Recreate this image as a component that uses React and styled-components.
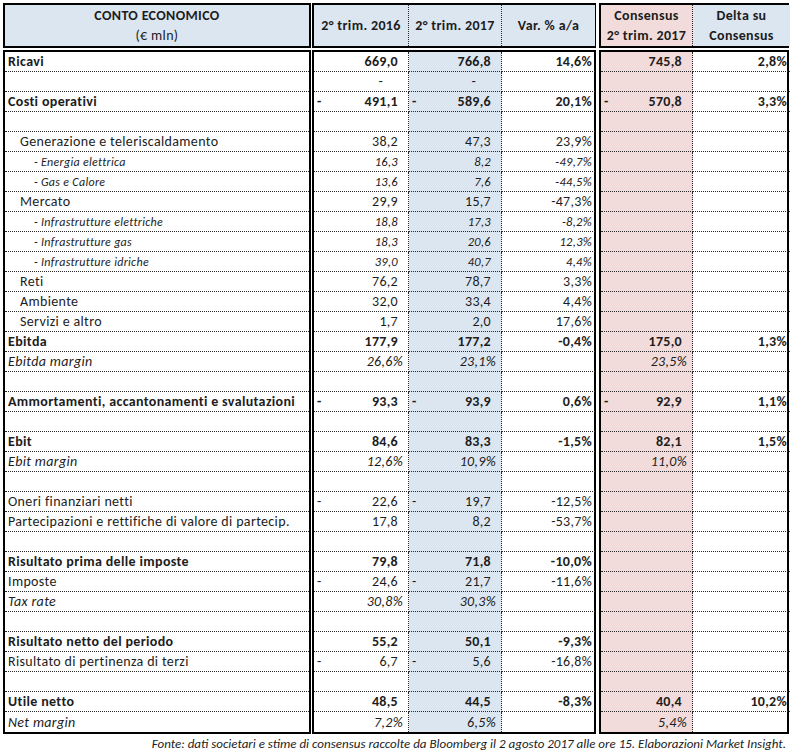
import React from 'react';
import styled, { createGlobalStyle } from 'styled-components';

const BLUE = '#dce6f1';
const PINK = '#f2dcdb';
const DOT = '1px dotted #2a2a2a';

const GlobalStyle = createGlobalStyle`
  body {
    margin: 0;
    background: #fff;
    font-family: "Carlito", "Lato", "Liberation Sans", sans-serif;
    color: #1c1c1c;
  }
`;

// label, kind, [2016, 2017, var], [consensus, delta]
const rows = [
  { label: 'Ricavi', kind: 'bold', v: ['669,0', '766,8', '14,6%'], c: ['745,8', '2,8%'] },
  { kind: 'blank', v: ['-', '-', ''] },
  { label: 'Costi operativi', kind: 'bold', v: ['- 491,1', '- 589,6', '20,1%'], c: ['- 570,8', '3,3%'] },
  { kind: 'blank' },
  { label: 'Generazione e teleriscaldamento', kind: 'item', v: ['38,2', '47,3', '23,9%'] },
  { label: '- Energia elettrica', kind: 'sub', v: ['16,3', '8,2', '-49,7%'] },
  { label: '- Gas e Calore', kind: 'sub', v: ['13,6', '7,6', '-44,5%'] },
  { label: 'Mercato', kind: 'item', v: ['29,9', '15,7', '-47,3%'] },
  { label: '- Infrastrutture elettriche', kind: 'sub', v: ['18,8', '17,3', '-8,2%'] },
  { label: '- Infrastrutture gas', kind: 'sub', v: ['18,3', '20,6', '12,3%'] },
  { label: '- Infrastrutture idriche', kind: 'sub', v: ['39,0', '40,7', '4,4%'] },
  { label: 'Reti', kind: 'item', v: ['76,2', '78,7', '3,3%'] },
  { label: 'Ambiente', kind: 'item', v: ['32,0', '33,4', '4,4%'] },
  { label: 'Servizi e altro', kind: 'item', v: ['1,7', '2,0', '17,6%'] },
  { label: 'Ebitda', kind: 'bold', v: ['177,9', '177,2', '-0,4%'], c: ['175,0', '1,3%'] },
  { label: 'Ebitda margin', kind: 'margin', v: ['26,6%', '23,1%', ''], c: ['23,5%', ''] },
  { kind: 'blank' },
  { label: 'Ammortamenti, accantonamenti e svalutazioni', kind: 'bold', v: ['- 93,3', '- 93,9', '0,6%'], c: ['- 92,9', '1,1%'] },
  { kind: 'blank' },
  { label: 'Ebit', kind: 'bold', v: ['84,6', '83,3', '-1,5%'], c: ['82,1', '1,5%'] },
  { label: 'Ebit margin', kind: 'margin', v: ['12,6%', '10,9%', ''], c: ['11,0%', ''] },
  { kind: 'blank' },
  { label: 'Oneri finanziari netti', kind: 'plain', v: ['- 22,6', '- 19,7', '-12,5%'] },
  { label: 'Partecipazioni e rettifiche di valore di partecip.', kind: 'plain', v: ['17,8', '8,2', '-53,7%'] },
  { kind: 'blank' },
  { label: 'Risultato prima delle imposte', kind: 'bold', v: ['79,8', '71,8', '-10,0%'] },
  { label: 'Imposte', kind: 'plain', v: ['- 24,6', '- 21,7', '-11,6%'] },
  { label: 'Tax rate', kind: 'margin', v: ['30,8%', '30,3%', ''] },
  { kind: 'blank' },
  { label: 'Risultato netto del periodo', kind: 'bold', v: ['55,2', '50,1', '-9,3%'] },
  { label: 'Risultato di pertinenza di terzi', kind: 'plain', v: ['- 6,7', '- 5,6', '-16,8%'] },
  { kind: 'blank' },
  { label: 'Utile netto', kind: 'bold', v: ['48,5', '44,5', '-8,3%'], c: ['40,4', '10,2%'] },
  { label: 'Net margin', kind: 'margin', v: ['7,2%', '6,5%', ''], c: ['5,4%', ''] },
];

const indent = { item: 12, sub: 26 };

const Page = styled.div`
  padding: 3px 0 0 3px;
  width: 790px;
`;

const Sheet = styled.div`
  display: grid;
  grid-template-columns: 308px 285px 193px;
  grid-template-rows: 45px auto;
  row-gap: 2px;
`;

const Box = styled.div`
  border: 2px solid #000;
  margin-left: ${p => p.$ml || 0}px;
  background: #fff;
  display: ${p => (p.$cols ? 'grid' : 'block')};
  grid-template-columns: ${p => p.$cols || 'none'};
`;

const HeadCell = styled.div`
  background: ${p => p.$bg};
  display: flex;
  flex-direction: column;
  align-items: center;
  justify-content: center;
  height: 100%;
  box-sizing: border-box;
  border-right: ${p => (p.$sep ? DOT : 'none')};
  font-size: 14px;
  letter-spacing: 0.35px;
  font-weight: 700;
  line-height: 20px;
  text-align: center;
`;

const HeadSub = styled.span`
  font-weight: 400;
`;

const LabelCell = styled.div`
  height: 20px;
  box-sizing: border-box;
  border-bottom: ${p => (p.$last ? 'none' : DOT)};
  padding-left: ${p => p.$indent + 3}px;
  display: flex;
  align-items: center;
  white-space: nowrap;
  font-size: ${p => (p.$kind === 'sub' ? '12px' : '14px')};
  letter-spacing: ${p => (p.$kind === 'sub' ? '0.3px' : '0.35px')};
  font-weight: ${p => (p.$kind === 'bold' ? 700 : 400)};
  font-style: ${p => (p.$kind === 'sub' || p.$kind === 'margin' ? 'italic' : 'normal')};
`;

const NumCell = styled.div`
  height: 20px;
  box-sizing: border-box;
  background: ${p => p.$bg || 'transparent'};
  border-bottom: ${p => (p.$last ? 'none' : DOT)};
  border-right: ${p => (p.$sep ? DOT : 'none')};
  padding: 0 ${p => p.$pr}px 0 3px;
  display: flex;
  align-items: center;
  justify-content: space-between;
  white-space: nowrap;
  font-size: ${p => (p.$kind === 'sub' ? '12.5px' : '14px')};
  letter-spacing: 0.3px;
  font-weight: ${p => (p.$kind === 'bold' ? 700 : 400)};
  font-style: ${p => (p.$kind === 'sub' || p.$kind === 'margin' ? 'italic' : 'normal')};
`;

const Caption = styled.div`
  text-align: right;
  padding: 2px 7px 0 0;
  font-size: 13px;
  font-style: italic;
  color: #1c1c1c;
`;

function Value({ text, kind, last, sep, bg, pctCol }) {
  let dash = '';
  let num = text || '';
  if (num.startsWith('- ')) {
    dash = '-';
    num = num.slice(2);
  }
  let pr = num.endsWith('%') ? (pctCol ? 3 : 5) : 10;
  if (num === '-') pr = 25;
  return (
    <NumCell $kind={kind} $last={last} $sep={sep} $bg={bg} $pr={pr}>
      <span>{dash}</span>
      <span>{num}</span>
    </NumCell>
  );
}

export default function App() {
  const n = rows.length;
  return (
    <Page>
      <GlobalStyle />
      <Sheet>
        <Box>
          <HeadCell $bg={BLUE}>
            <span>CONTO ECONOMICO</span>
            <HeadSub>(€ mln)</HeadSub>
          </HeadCell>
        </Box>
        <Box $ml={1} $cols="95px 93px 93px">
          <HeadCell $bg={BLUE} $sep>2° trim. 2016</HeadCell>
          <HeadCell $bg={BLUE} $sep>2° trim. 2017</HeadCell>
          <HeadCell $bg={BLUE}>Var. % a/a</HeadCell>
        </Box>
        <Box $ml={3} $cols="92px 97px">
          <HeadCell $bg={PINK} $sep>
            <span>Consensus</span>
            <span>2° trim. 2017</span>
          </HeadCell>
          <HeadCell $bg={BLUE}>
            <span>Delta su</span>
            <span>Consensus</span>
          </HeadCell>
        </Box>

        <Box>
          {rows.map((r, i) => (
            <LabelCell key={i} $kind={r.kind} $indent={indent[r.kind] || 0} $last={i === n - 1}>
              {r.label || ''}
            </LabelCell>
          ))}
        </Box>
        <Box $ml={1} $cols="95px 93px 93px">
          {rows.map((r, i) => {
            const v = r.v || ['', '', ''];
            const last = i === n - 1;
            return (
              <React.Fragment key={i}>
                <Value text={v[0]} kind={r.kind} last={last} sep />
                <Value text={v[1]} kind={r.kind} last={last} sep bg={BLUE} />
                <Value text={v[2]} kind={r.kind} last={last} pctCol />
              </React.Fragment>
            );
          })}
        </Box>
        <Box $ml={3} $cols="92px 97px">
          {rows.map((r, i) => {
            const c = r.c || ['', ''];
            const last = i === n - 1;
            return (
              <React.Fragment key={i}>
                <Value text={c[0]} kind={r.kind} last={last} sep bg={PINK} />
                <Value text={c[1]} kind={r.kind} last={last} pctCol />
              </React.Fragment>
            );
          })}
        </Box>
      </Sheet>
      <Caption>
        Fonte: dati societari e stime di consensus raccolte da Bloomberg il 2 agosto 2017 alle ore 15. Elaborazioni Market Insight.
      </Caption>
    </Page>
  );
}
